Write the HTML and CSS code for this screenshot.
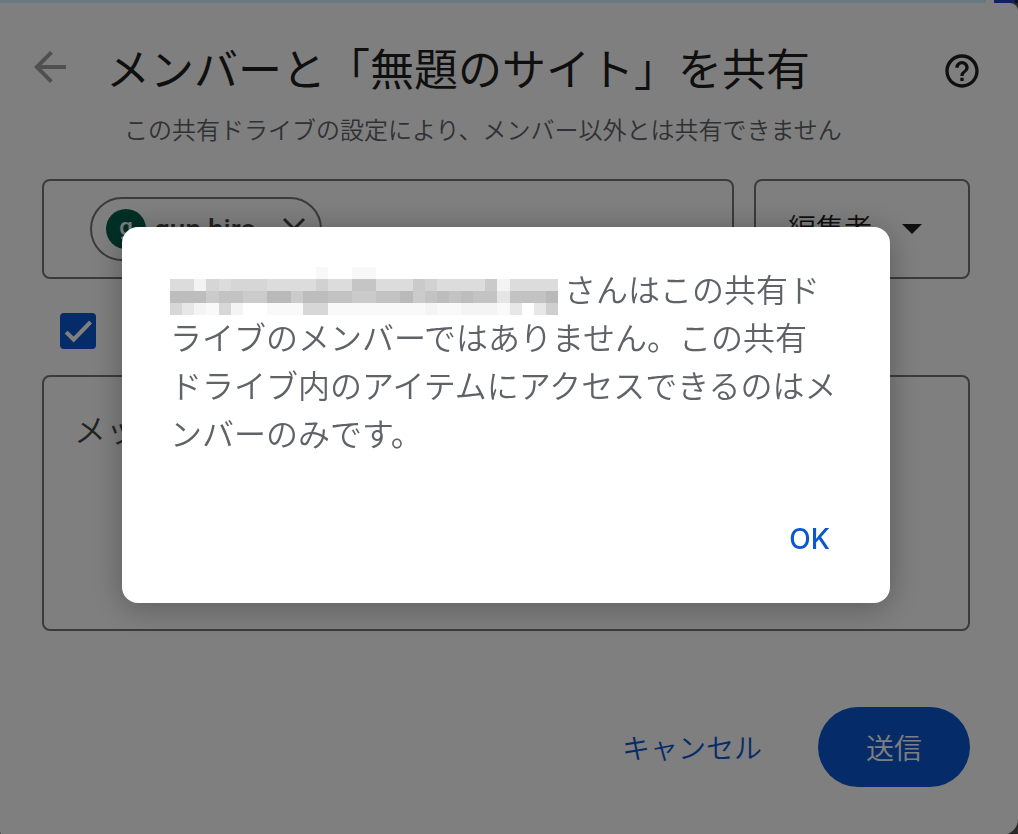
FILE: index.html
```html
<!DOCTYPE html>
<html lang="ja">
<head>
  <meta charset="UTF-8">
  <meta name="viewport" content="width=device-width, initial-scale=1">
  <title>共有</title>
  <link rel="stylesheet" href="styles.css">
</head>
<body>
  <div class="app-strip">
    <span class="strip-search"></span>
    <span class="strip-button"></span>
  </div>

  <main class="share">
    <header class="share-header">
      <button class="icon-button back" type="button" aria-label="戻る">
        <svg width="48" height="48" viewBox="0 0 24 24" fill="currentColor"><path d="M20 11H7.83l5.59-5.59L12 4l-8 8 8 8 1.41-1.41L7.83 13H20z"/></svg>
      </button>
      <h1>メンバーと「無題のサイト」を共有</h1>
      <button class="icon-button help" type="button" aria-label="ヘルプ">
        <svg width="40" height="40" viewBox="0 0 24 24" fill="currentColor"><path d="M11 18h2v-2h-2v2zm1-16C6.48 2 2 6.48 2 12s4.48 10 10 10 10-4.48 10-10S17.52 2 12 2zm0 18c-4.41 0-8-3.59-8-8s3.59-8 8-8 8 3.59 8 8-3.59 8-8 8zm0-14c-2.21 0-4 1.79-4 4h2c0-1.1.9-2 2-2s2 .9 2 2c0 2-3 1.75-3 5h2c0-2.25 3-2.5 3-5 0-2.21-1.79-4-4-4z"/></svg>
      </button>
    </header>
    <p class="share-note">この共有ドライブの設定により、メンバー以外とは共有できません</p>

    <form class="share-form">
      <div class="people-row">
        <div class="people">
          <span class="chip">
            <span class="avatar">g</span>
            <span class="chip-name">gun hiro</span>
            <button class="chip-remove" type="button" aria-label="削除">
              <svg width="24" height="24" viewBox="0 0 24 24" fill="none" stroke="currentColor" stroke-width="3"><path d="M2 2l20 20M22 2L2 22"/></svg>
            </button>
          </span>
          <input class="people-input" type="text" aria-label="ユーザーを追加">
        </div>
        <div class="role">
          <select class="role-select" aria-label="権限">
            <option>編集者</option>
          </select>
          <svg class="role-arrow" width="20" height="10" viewBox="0 0 20 10" fill="currentColor"><path d="M0 0h20L10 10z"/></svg>
        </div>
      </div>

      <div class="notify">
        <input class="checkbox" type="checkbox" aria-label="通知" checked>
      </div>

      <textarea class="message" placeholder="メッセージ" aria-label="メッセージ"></textarea>

      <div class="actions">
        <button class="cancel" type="button">キャンセル</button>
        <button class="send" type="submit">送信</button>
      </div>
    </form>
  </main>

  <div class="scrim">
    <div class="alert" role="alertdialog" aria-modal="true" aria-describedby="alertText">
      <p class="alert-text" id="alertText"><svg class="redacted" width="388" height="48" viewBox="0 0 32 4" preserveAspectRatio="none" shape-rendering="crispEdges" aria-hidden="true">
          <!-- overshoot of the tall letters -->
          <path fill="#f8f8f8" d="M12 0h1v1h-1z"/>
          <path fill="#f8f8f8" d="M15 0h2v1h-2z"/>
          <!-- upper half -->
          <path fill="#dcdcdc" d="M0 1h32v1H0z"/>
          <path fill="#f3f3f3" d="M2 1h1v1H2zM27 1h1v1h-1z"/>
          <path fill="#d6d6d6" d="M3 1h1v1H3zM5 1h3v1H5z"/>
          <path fill="#d1d1d1" d="M12 1h1v1h-1zM21 1h1v1h-1z"/>
          <path fill="#c5c5c5" d="M15 1h2v1h-2z"/>
          <path fill="#cacaca" d="M20 1h1v1h-1zM26 1h1v1h-1z"/>
          <!-- lower half -->
          <path fill="#c3c3c3" d="M0 2h32v1H0z"/>
          <path fill="#bdbdbd" d="M0 2h3v1H0zM11 2h2v1h-2zM22 2h1v1h-1zM24 2h1v1h-1z"/>
          <path fill="#cbcbcb" d="M3 2h1v1H3zM6 2h2v1H6zM10 2h1v1h-1zM15 2h2v1h-2zM20 2h1v1h-1z"/>
          <path fill="#b9b9b9" d="M8 2h2v1H8zM19 2h1v1h-1zM31 2h1v1h-1z"/>
          <path fill="#e5e5e5" d="M27 2h1v1h-1z"/>
          <!-- descenders -->
          <path fill="#f9f9f9" d="M3 3h1v1H3zM8 3h21v1H8z"/>
          <path fill="#d7d7d7" d="M0 3h1v1H0zM4 3h1v1H4zM11 3h2v1h-2z"/>
          <path fill="#e7e7e7" d="M1 3h1v1H1zM28 3h1v1h-1zM30 3h1v1h-1z"/>
          <path fill="#f4f4f4" d="M2 3h1v1H2zM5 3h1v1H5zM21 3h1v1h-1zM24 3h3v1h-3z"/>
          <path fill="#cfcfcf" d="M31 3h1v1h-1z"/>
        </svg>さんはこの共有ドライブのメンバーではありません。この共有<br>ドライブ内のアイテムにアクセスできるのはメンバーのみです。</p>
      <div class="alert-actions">
        <button class="ok" type="button">OK</button>
      </div>
    </div>
  </div>
</body>
</html>
```

FILE: styles.css
```css
* {
  box-sizing: border-box;
}

body {
  margin: 0;
  min-height: 100vh;
  display: flex;
  flex-direction: column;
  background: #555;
  color: #1f1f1f;
  font-family: Roboto, "Noto Sans CJK JP", sans-serif;
  font-size: 28px;
  font-weight: 350;
}

button,
input,
select,
textarea {
  font: inherit;
  color: inherit;
}

button {
  padding: 0;
  border: 0;
  background: none;
  cursor: pointer;
}

svg {
  display: block;
}

/* sliver of the page above the share panel */
.app-strip {
  display: flex;
  gap: 8px;
  height: 3px;
  padding-right: 3px;
  background: linear-gradient(to left, #222 3px, #fff 3px);
}
.strip-search {
  flex: 1;
  background: #d0f4ff;
}
.strip-button {
  width: 21px;
  background: #2040c0;
}

.share {
  flex: 1;
  background: #fff;
  border-radius: 0 8px 16px 4px;
}
.share-header {
  display: flex;
  align-items: center;
  padding: 32px 36px 0 26px;
}
.share-header h1 {
  flex: 1;
  margin: 0 0 0 32px;
  font-size: 44px;
  font-weight: 400;
  line-height: 72px;
}
.icon-button.back {
  align-self: flex-start;
  padding-top: 8px;
  color: #a0a0a0;
}
.share-note {
  margin: 0 48px 0 124px;
  color: #5f6368;
  font-size: 24px;
  line-height: 48px;
}

.share-form {
  padding: 24px 48px 48px 42px;
}
.people-row {
  display: flex;
  gap: 20px;
}
.people {
  flex: 1;
  min-width: 0;
  display: flex;
  align-items: center;
  height: 100px;
  padding: 0 16px 0 46px;
  border: 2px solid #747775;
  border-radius: 8px;
}
.chip {
  display: flex;
  align-items: center;
  height: 64px;
  padding: 0 14px;
  border: 2px solid #747775;
  border-radius: 32px;
  color: #444746;
  font-weight: 500;
}
.avatar {
  width: 40px;
  height: 40px;
  border-radius: 50%;
  background: #045f4b;
  color: #fff;
  font-size: 24px;
  line-height: 36px;
  text-align: center;
}
.chip-name {
  margin: 0 26px 0 8px;
  white-space: nowrap;
}
.people-input {
  flex: 1;
  min-width: 0;
  border: 0;
  outline: 0;
  background: none;
}
.role {
  display: grid;
  align-items: center;
  width: 216px;
}
.role-select,
.role-arrow {
  grid-area: 1 / 1;
}
.role-select {
  appearance: none;
  width: 100%;
  height: 100px;
  padding: 0 32px;
  border: 2px solid #747775;
  border-radius: 8px;
  background: none;
}
.role-arrow {
  justify-self: end;
  margin-right: 48px;
  pointer-events: none;
}

.notify {
  display: flex;
  align-items: center;
  height: 96px;
  padding: 8px 18px 0;
}
.checkbox {
  appearance: none;
  display: grid;
  width: 36px;
  height: 36px;
  margin: 0;
  border: 2px solid #747775;
  border-radius: 4px;
}
.checkbox:checked {
  border: 0;
  background: #0b57d0;
}
.checkbox:checked::before {
  content: "";
  background: #fff;
  clip-path: polygon(13% 57%, 21% 49%, 38% 65%, 81% 21%, 89% 29%, 38% 82%);
}

.message {
  display: block;
  width: 100%;
  height: 256px;
  padding: 30px;
  border: 2px solid #747775;
  border-radius: 8px;
  background: none;
  font-size: 32px;
  line-height: 48px;
  resize: none;
}
.message::placeholder {
  color: #444746;
}

.actions {
  display: flex;
  justify-content: flex-end;
  gap: 56px;
  padding-top: 76px;
}
.cancel {
  color: #0b57d0;
}
.send {
  width: 152px;
  height: 80px;
  border-radius: 40px;
  background: #0b57d0;
  color: #fff;
}

.scrim {
  position: fixed;
  inset: 0;
  display: flex;
  align-items: center;
  justify-content: center;
  padding: 0 6px 4px 0;
  background: rgba(0, 0, 0, 0.5);
}
.alert {
  width: 768px;
  max-width: 100%;
  padding: 40px 48px 24px;
  background: #fff;
  border-radius: 16px;
  box-shadow: 0 4px 32px rgba(0, 0, 0, 0.3);
}
.alert-text {
  margin: 0;
  color: #5f6368;
  font-size: 32px;
  line-height: 48px;
}
.redacted {
  display: inline-block;
  max-width: 100%;
  margin-right: 6px;
  vertical-align: bottom;
}
.alert-actions {
  display: flex;
  justify-content: flex-end;
  padding-top: 40px;
}
.ok {
  height: 80px;
  padding: 0 12px;
  color: #0b57d0;
  font-family: Inter, sans-serif;
  font-weight: 500;
}
```
